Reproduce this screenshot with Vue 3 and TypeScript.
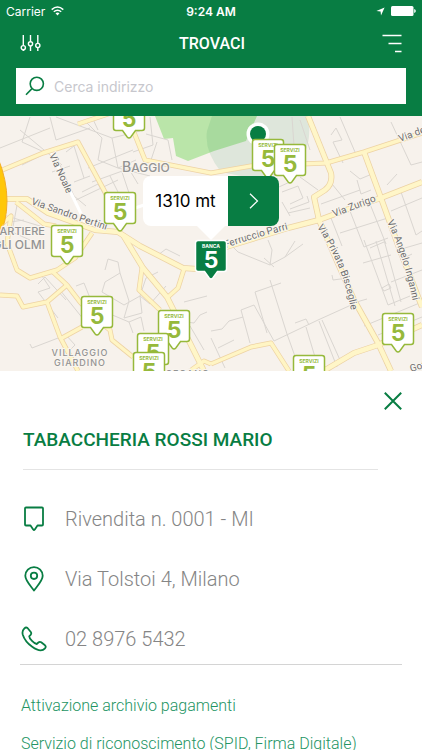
<script setup lang="ts">
import { ref } from 'vue'

interface Pin {
  x: number
  y: number
  kind: 'SERVIZI' | 'BANCA'
}

interface StreetLabel {
  text: string
  d: string
}

const address = ref('')

const pins: Pin[] = [
  { x: 129, y: 24, kind: 'SERVIZI' },
  { x: 120, y: 117, kind: 'SERVIZI' },
  { x: 67, y: 150, kind: 'SERVIZI' },
  { x: 97, y: 221, kind: 'SERVIZI' },
  { x: 174, y: 235, kind: 'SERVIZI' },
  { x: 153, y: 258, kind: 'SERVIZI' },
  { x: 149, y: 277, kind: 'SERVIZI' },
  { x: 268, y: 64, kind: 'SERVIZI' },
  { x: 290, y: 69, kind: 'SERVIZI' },
  { x: 398, y: 238, kind: 'SERVIZI' },
  { x: 309, y: 280, kind: 'SERVIZI' },
  { x: 211, y: 165, kind: 'BANCA' },
]

const minorRoads: string[] = [
  'M50 117L56 140L90 128M20 130L62 165M0 148L50 128M30 117L22 142L44 152',
  'M56 117L112 138L140 131M86 122L102 138L98 160M112 138L118 168L136 160',
  'M98 160L118 168L150 176M88 168L133 150M92 182L136 166M76 200L118 180',
  'M78 142L52 150L22 165M60 165L74 196L86 206M110 176L120 196M122 172L130 196',
  'M82 192L98 184L108 202M74 182L90 176M66 152L74 146L84 178M126 164L138 184',
  'M92 117L98 130M150 117L153 145L133 152M146 134L168 140L172 160M157 142L151 160',
  'M52 172L70 166M0 214L40 226M18 200L12 232L30 240M24 220L10 222',
  'M42 276L50 288L38 292L58 318M38 284L45 277L66 300M60 290L84 320M76 286L84 283L92 303',
  'M92 297L104 306M102 292L105 282L120 273L118 262L108 259L105 270M120 273L129 301L124 318',
  'M102 292L124 305L140 296M124 318L142 313L140 296L146 278L158 272M140 296L150 304L166 286',
  'M30 344L32 348L66 335M66 335L75 345L68 352M110 314L129 322L133 333M129 322L141 317L144 331',
  'M186 322L194 323L200 315L207 312M184 302L207 296M190 326L204 350M158 255L166 249L180 256',
  'M280 145L294 170L270 175M292 117L294 146M300 120L310 150M331 135L336 128L342 140L333 142L343 163',
  'M340 117L355 152M391 122L411 165L422 162M300 177L318 190M254 178L268 192L292 181',
  'M282 192L298 186L303 198L290 204M290 209L309 202L307 196M288 213L310 208M282 202L290 216',
  'M321 204L360 190M332 184L345 200M350 171L360 179L372 174M357 180L361 194L371 190',
  'M331 218L342 246M350 211L364 247L388 238M370 204L386 244M340 233L391 217M391 211L422 198',
  'M401 192L416 235L422 231M387 185L397 174M364 240L388 305L410 296M370 248L384 242',
  'M376 241L395 306M384 240L401 302M363 263L391 255M398 250L422 243M391 282L422 270',
  'M382 288L389 284L391 288L384 291ZM400 260L412 254M332 275L333 280L348 278',
  'M211 331L222 329L229 321L243 317M241 310L254 305L274 341M255 292L281 283M270 280L287 334M241 310L250 343',
  'M255 292L267 333M274 341L318 320L360 301L367 299M295 323L306 319L309 325M306 327L318 367M319 321L337 367',
  'M322 320L340 360M287 334L297 362M364 326L422 302M378 335L422 317M211 338L225 368M218 348L234 340',
  'M228 242L238 252L270 265L272 250L268 240M270 265L285 257L303 244M285 257L295 241M264 258L274 267',
]

const mainRoads: string[] = [
  'M0 171L43 153L78 142L105 192L112 205',
  'M78 124L120 110M131 125L145 160L211 173L251 166L326 163L364 152L422 133',
  'M7 243L17 270L30 278L57 270L75 258L92 233',
  'M53 272L67 285L80 302L97 320L110 330L112 340L133 357',
  'M67 285L47 302L60 337L78 371M0 295L17 296L23 307L47 302M62 338L82 327',
  'M142 268L139 290L160 310M184 269L178 288L168 297',
  'M2 224L11 216L7 243M16 202L44 224L56 226',
  'M211 364L251 347L271 343L289 371M190 371L204 361L211 364',
]

const wideRoads: string[] = [
  'M5 199L27 199L48 213L95 230L118 232L140 246L183 268L197 269L211 262L226 247L288 228L319 220L354 207L381 198L422 182',
  'M123 235L143 268L167 297L190 343L204 371',
  'M308 116L331 173Q333 184 325 190L314 197L319 220L354 300L378 343L391 371',
  'M364 152L381 198L398 245L422 307',
  'M320 373L354 353L378 345L422 325',
]

const streets: StreetLabel[] = [
  { text: 'Via Noale', d: 'M49 155L76 214' },
  { text: 'Via Sandro Pertini', d: 'M31 204Q66 217 125 236' },
  { text: 'Ferruccio Parri', d: 'M226 248Q252 238 310 224' },
  { text: 'Via Zurigo', d: 'M334 217L390 196' },
  { text: 'Via de', d: 'M400 142L440 127' },
  { text: 'Via Privata Bisceglie', d: 'M317 227Q344 266 352 316' },
  { text: 'Via Angelo Inganni', d: 'M387 222Q406 260 416 318' },
  { text: 'Gotti', d: 'M411 372L440 363' },
]

const services: string[] = [
  'Attivazione archivio pagamenti',
  'Servizio di riconoscimento (SPID, Firma Digitale)',
]
</script>

<template>
  <div class="app">
    <header class="header">
      <div class="status">
        <div class="carrier">
          <span>Carrier</span>
          <svg width="13" height="10" viewBox="0 0 13 10" fill="none" stroke="#fff" stroke-width="1.5">
            <path d="M.7 3.6Q6.5-1.5 12.3 3.6M2.8 5.8Q6.5 2.6 10.2 5.8" />
            <path d="M4.5 7.3Q6.5 5.7 8.5 7.3L6.5 9.5Z" fill="#fff" stroke="none" />
          </svg>
        </div>
        <span class="time">9:24 AM</span>
        <div class="indicators">
          <svg width="9" height="9" viewBox="0 0 9 9"><path d="M8.6.4L5 8.5L4.6 4.4L.4 4Z" fill="#fff" /></svg>
          <svg width="25" height="10" viewBox="0 0 25 10" fill="#fff">
            <rect width="22.5" height="10" rx="1.5" /><path d="M23.2 3Q24.8 3.4 24.8 5T23.2 7Z" />
          </svg>
        </div>
      </div>

      <nav class="nav">
        <button class="icon-button" type="button" aria-label="Filtri">
          <svg width="22" height="18" viewBox="0 0 22 18" fill="none" stroke="#fff" stroke-width="1.4">
            <path d="M3.3 1V11.5M3.3 16V17M10.5 1V7.6M10.5 12V17M17.8 1V9.3M17.8 13.7V17" />
            <circle cx="3.3" cy="13.7" r="2.1" /><circle cx="10.5" cy="9.8" r="2.1" /><circle cx="17.8" cy="11.5" r="2.1" />
          </svg>
        </button>
        <h1 class="title">TROVACI</h1>
        <button class="icon-button" type="button" aria-label="Menu">
          <svg width="20" height="19" viewBox="0 0 20 19" stroke="#fff" stroke-width="1.3">
            <path d="M.5 1.5H19.5M6.5 9.5H19.5M13 17.5H19.5" />
          </svg>
        </button>
      </nav>

      <label class="search">
        <svg width="20" height="20" viewBox="0 0 20 20" fill="none" stroke="#087d43" stroke-width="1.6">
          <circle cx="11.8" cy="7.8" r="6.6" /><path d="M7 12.6L1 18.8" />
        </svg>
        <input v-model="address" class="search-input" type="text" placeholder="Cerca indirizzo" aria-label="Cerca indirizzo" />
      </label>
    </header>

    <main class="map">
      <svg class="map-art" viewBox="0 116 422 255" preserveAspectRatio="xMidYMid slice">
        <rect y="116" width="422" height="255" fill="#f7f2ec" />
        <path d="M155 116H257L246 141L214 151L188 161L176 156L173 138L164 139Z" fill="#bae5a9" />
        <path d="M212 116H308Q314 150 292 170L251 178L221 172Q204 151 207 131Z" fill="#087d43" opacity=".1" />
        <g fill="none" stroke="#dad6d1" stroke-width="1">
          <path v-for="road in minorRoads" :key="road" :d="road" />
        </g>
        <path d="M51 152L88 228M120 213L150 203" fill="none" stroke="#fff" stroke-width="3" />
        <g fill="none" stroke="#eed3a4" stroke-width="5" stroke-linejoin="round">
          <path v-for="road in mainRoads" :key="road" :d="road" />
        </g>
        <g fill="none" stroke="#ecd2a4" stroke-width="6" stroke-linejoin="round">
          <path v-for="road in wideRoads" :key="road" :d="road" />
        </g>
        <g fill="none" stroke="#fff5c4" stroke-width="3.5" stroke-linejoin="round">
          <path v-for="road in mainRoads" :key="road" :d="road" />
        </g>
        <g fill="none" stroke="#fff6c8" stroke-width="4.5" stroke-linejoin="round">
          <path v-for="road in wideRoads" :key="road" :d="road" />
        </g>
        <path d="M-2 158Q7 180 7 201T-2 239Z" fill="#ffc709" stroke="#f2ad27" />

        <g class="street">
          <template v-for="(street, i) in streets" :key="street.text">
            <path :id="`street-${i}`" :d="street.d" fill="none" stroke="none" />
            <text><textPath :href="`#street-${i}`">{{ street.text }}</textPath></text>
          </template>
        </g>
        <g class="district">
          <text x="122" y="172" font-size="14">B<tspan font-size="12">AGGIO</tspan></text>
          <text x="45" y="235" font-size="11" text-anchor="end">QUARTIERE</text>
          <text x="45" y="249" font-size="12" text-anchor="end">DEGLI OLMI</text>
          <g class="suburb" text-anchor="middle">
            <text x="80" y="356">VILLAGGIO</text>
            <text x="80" y="366">GIARDINO</text>
            <text x="188" y="377">SEGANO</text>
          </g>
        </g>
        <g>
          <circle cx="258" cy="134" r="11.5" fill="#fff" /><circle cx="258" cy="134" r="8" fill="#087d43" />
        </g>
      </svg>

      <button
        v-for="(pin, i) in pins"
        :key="i"
        class="pin"
        :class="{ bank: pin.kind === 'BANCA' }"
        type="button"
        :style="{ left: `${(pin.x / 422) * 100}%`, top: `${pin.y}px` }"
      >
        <svg width="34" height="42" viewBox="0 0 34 42">
          <path class="pin-shape" d="M4 1.5H30Q32.5 1.5 32.5 4V30Q32.5 32.5 30 32.5H23.5L18.8 39Q17 41.2 15.2 39L10.5 32.5H4Q1.5 32.5 1.5 30V4Q1.5 1.5 4 1.5Z" />
          <text class="pin-name" x="17" y="9">{{ pin.kind }}</text>
          <text class="pin-number" x="17" y="29">5</text>
        </svg>
      </button>

      <div class="callout">
        <span class="distance">1310 mt</span>
        <button class="go" type="button" aria-label="Indicazioni">
          <svg width="10" height="16" viewBox="0 0 10 16" fill="none" stroke="#fff" stroke-width="1.2"><path d="M1 .7L8.5 8L1 15.3" /></svg>
        </button>
      </div>
    </main>

    <section class="sheet">
      <button class="close" type="button" aria-label="Chiudi">
        <svg width="18" height="18" viewBox="0 0 18 18" stroke="#087d43" stroke-width="2"><path d="M.8.8L17.2 17.2M17.2.8L.8 17.2" /></svg>
      </button>
      <h2 class="name">TABACCHERIA ROSSI MARIO</h2>
      <ul class="details">
        <li class="detail">
          <svg width="26" height="26" viewBox="0 0 26 26" fill="none" stroke="#087d43" stroke-width="1.8" stroke-linejoin="round">
            <path d="M5 1.5H21Q22 1.5 22 2.5V18.5Q22 19.5 21 19.5H16.5L13.8 23.5Q13 24.5 12.2 23.5L9.5 19.5H5Q4 19.5 4 18.5V2.5Q4 1.5 5 1.5Z" />
          </svg>
          <span>Rivendita n. 0001 - MI</span>
        </li>
        <li class="detail">
          <svg width="26" height="26" viewBox="0 0 26 26" fill="none" stroke="#087d43" stroke-width="1.8" stroke-linejoin="round">
            <path d="M13 24.5C11 21.5 4.3 15 4.3 9.8A8.7 8.7 0 0 1 21.7 9.8C21.7 15 15 21.5 13 24.5Z" /><circle cx="13" cy="9.8" r="3.2" />
          </svg>
          <span>Via Tolstoi 4, Milano</span>
        </li>
        <li class="detail">
          <svg width="26" height="26" viewBox="0 0 26 26" fill="none" stroke="#087d43" stroke-width="1.8" stroke-linejoin="round">
            <path d="M3.4 2.3Q5 .8 6.5 2L9.8 6Q10.8 7.4 9.6 8.8L8.2 10.3Q8.2 12 11 14.9T15.7 18L17.4 16.5Q18.7 15.4 20.2 16.3L24 19.3Q25.5 20.7 24 22.3C21.3 25.5 16.5 24.6 11.2 20.8C6.8 17.6 3.1 12.9 1.8 8.7C1.1 6.2 1.7 3.9 3.4 2.3Z" />
          </svg>
          <span>02 8976 5432</span>
        </li>
      </ul>
      <ul class="services">
        <li v-for="service in services" :key="service"><a class="service" href="#">{{ service }}</a></li>
      </ul>
    </section>
  </div>
</template>

<style>
body {
  margin: 0;
  background: #fff;
}
</style>

<style scoped>
.app {
  display: flex;
  flex-direction: column;
  height: 100vh;
  overflow: hidden;
  font-family: Roboto, "Liberation Sans", sans-serif;
}
button {
  padding: 0;
  border: 0;
  background: none;
  cursor: pointer;
}
svg {
  display: block;
}
.header {
  flex: none;
  padding-bottom: 12px;
  background: #087d43;
  color: #fff;
}
.status {
  display: grid;
  grid-template-columns: 1fr auto 1fr;
  align-items: center;
  height: 22px;
  padding: 0 6px;
  font: 12px Inter, sans-serif;
}
.carrier,
.indicators {
  display: flex;
  align-items: center;
  gap: 6px;
}
.indicators {
  justify-content: flex-end;
}
.time {
  font-weight: 600;
}
.nav {
  display: flex;
  align-items: center;
  justify-content: space-between;
  height: 42px;
  margin-bottom: 4px;
  padding: 0 20px;
}
.title {
  margin: 0;
  font-size: 16px;
  font-weight: 500;
}
.search {
  display: flex;
  align-items: center;
  gap: 9px;
  height: 36px;
  margin: 0 16px;
  padding: 0 9px;
  background: #fff;
}
.search-input {
  flex: 1;
  min-width: 0;
  padding: 0;
  border: 0;
  outline: 0;
  background: none;
  color: #333;
  font: 14px Inter, sans-serif;
}
.search-input::placeholder {
  color: #c7c7cd;
  opacity: 1;
}
.map {
  position: relative;
  flex: none;
  height: 255px;
  overflow: hidden;
}
.map-art {
  width: 100%;
  height: 100%;
}
.street {
  fill: #6e6e6e;
  stroke: #f9f5ef;
  stroke-width: 2px;
  paint-order: stroke;
  font: 10px Roboto, sans-serif;
}
.district {
  fill: #939393;
  stroke: #f9f5ef;
  stroke-width: 2px;
  paint-order: stroke;
  font-family: Inter, sans-serif;
  font-weight: 500;
}
.suburb {
  font-size: 9px;
  letter-spacing: 1px;
}
.pin {
  position: absolute;
  transform: translate(-50%, -100%);
}
.pin-shape {
  fill: #fff;
  stroke: #96b93b;
  stroke-width: 1.5px;
}
.pin-name,
.pin-number {
  fill: #96b93b;
  font-family: Inter, sans-serif;
  font-weight: 700;
  text-anchor: middle;
}
.pin-name {
  font-size: 5px;
}
.pin-number {
  font-size: 23px;
}
.bank .pin-shape {
  fill: #087d43;
  stroke: #fff;
}
.bank .pin-name,
.bank .pin-number {
  fill: #fff;
}
.callout {
  position: absolute;
  top: 60px;
  left: 50%;
  display: flex;
  height: 50px;
  width: 136px;
  border-radius: 8px;
  background: #fff;
  transform: translateX(-50%);
}
.callout::after {
  position: absolute;
  top: 100%;
  left: 50%;
  border: 14px solid transparent;
  border-top-color: #fff;
  border-bottom: 0;
  content: "";
  transform: translateX(-50%);
}
.distance {
  flex: 1;
  align-self: center;
  color: #000;
  font: 17px Inter, sans-serif;
  text-align: center;
}
.go {
  display: flex;
  align-items: center;
  justify-content: center;
  width: 51px;
  border-radius: 0 8px 8px 0;
  background: #087d43;
}
.sheet {
  display: flex;
  flex: 1;
  flex-direction: column;
  min-height: 0;
  padding: 21px 20px 0;
  background: #fff;
}
.close {
  align-self: flex-end;
}
.name {
  margin: 18px 24px 0 3px;
  padding-bottom: 17px;
  border-bottom: 1px solid #e4e4e4;
  color: #087d43;
  font-size: 19px;
  font-weight: 500;
  line-height: 24px;
}
.details,
.services {
  margin: 0;
  padding: 0;
  list-style: none;
}
.details {
  display: flex;
  flex-direction: column;
  gap: 10px;
  padding-top: 24px;
  border-bottom: 1px solid #d4d4d4;
}
.detail {
  display: flex;
  align-items: center;
  gap: 18px;
  height: 50px;
  padding-left: 1px;
  color: #858585;
  font-size: 20px;
  font-weight: 300;
}
.services {
  padding: 22px 1px 0;
}
.service {
  display: block;
  color: #239463;
  font-size: 16px;
  font-weight: 300;
  line-height: 38px;
  text-decoration: none;
  white-space: nowrap;
}
</style>
